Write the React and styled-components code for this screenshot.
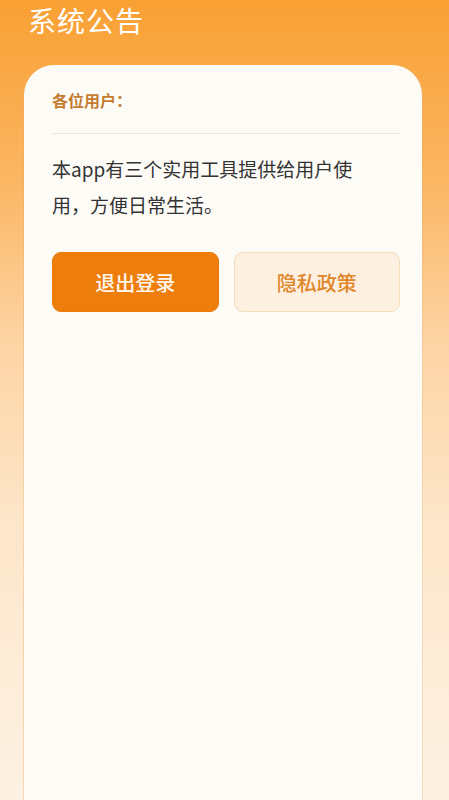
import React from "react";
import styled, { createGlobalStyle } from "styled-components";

const GlobalStyle = createGlobalStyle`
  html, body {
    margin: 0;
    padding: 0;
  }
  body {
    font-family: "Noto Sans CJK SC", "Noto Sans", sans-serif;
  }
`;

const Page = styled.div`
  width: 449px;
  height: 800px;
  overflow: hidden;
  background: linear-gradient(
    180deg,
    #f9a033 0%,
    #fbb561 22%,
    #fdd3a2 42%,
    #fde6c9 65%,
    #fdf1e3 100%
  );
  display: flex;
  flex-direction: column;
`;

const Header = styled.div`
  height: 40px;
  padding: 0 28px;
  display: flex;
  align-items: center;
`;

const Title = styled.h1`
  margin: 0;
  font-size: 28px;
  font-weight: 400;
  line-height: 40px;
  color: #ffffff;
  letter-spacing: 1px;
`;

const Card = styled.div`
  margin: 25px 27px 0 24px;
  flex: 1;
  background: #fdfbf6;
  border-radius: 30px 30px 0 0;
  box-shadow: -1px 0 0 rgba(224, 170, 110, 0.35), 1px 0 0 rgba(224, 170, 110, 0.25);
  padding: 23px 22px 0 28px;
  display: flex;
  flex-direction: column;
`;

const Greeting = styled.div`
  font-size: 16px;
  font-weight: 600;
  line-height: 24px;
  color: #c47c31;
`;

const Divider = styled.div`
  height: 1px;
  margin-top: 21px;
  background: #efe4d4;
`;

const Body = styled.p`
  margin: 17px 0 0;
  padding-right: 20px;
  font-size: 19px;
  line-height: 36px;
  color: #333333;
`;

const Actions = styled.div`
  margin-top: 29px;
  display: grid;
  grid-template-columns: 1fr 1fr;
  gap: 15px;
`;

const Button = styled.button`
  height: 60px;
  border-radius: 9px;
  font-family: inherit;
  font-size: 20px;
  font-weight: 500;
  cursor: pointer;
  border: 1px solid ${(p) => (p.$primary ? "#ea7a0a" : "#f5dcbd")};
  background: ${(p) => (p.$primary ? "#ee7e0c" : "#fdf0e1")};
  color: ${(p) => (p.$primary ? "#fff7ee" : "#e0872a")};
`;

export default function App() {
  return (
    <>
      <GlobalStyle />
      <Page>
        <Header>
          <Title>系统公告</Title>
        </Header>
        <Card>
          <Greeting>各位用户：</Greeting>
          <Divider />
          <Body>本app有三个实用工具提供给用户使用，方便日常生活。</Body>
          <Actions>
            <Button $primary>退出登录</Button>
            <Button>隐私政策</Button>
          </Actions>
        </Card>
      </Page>
    </>
  );
}
